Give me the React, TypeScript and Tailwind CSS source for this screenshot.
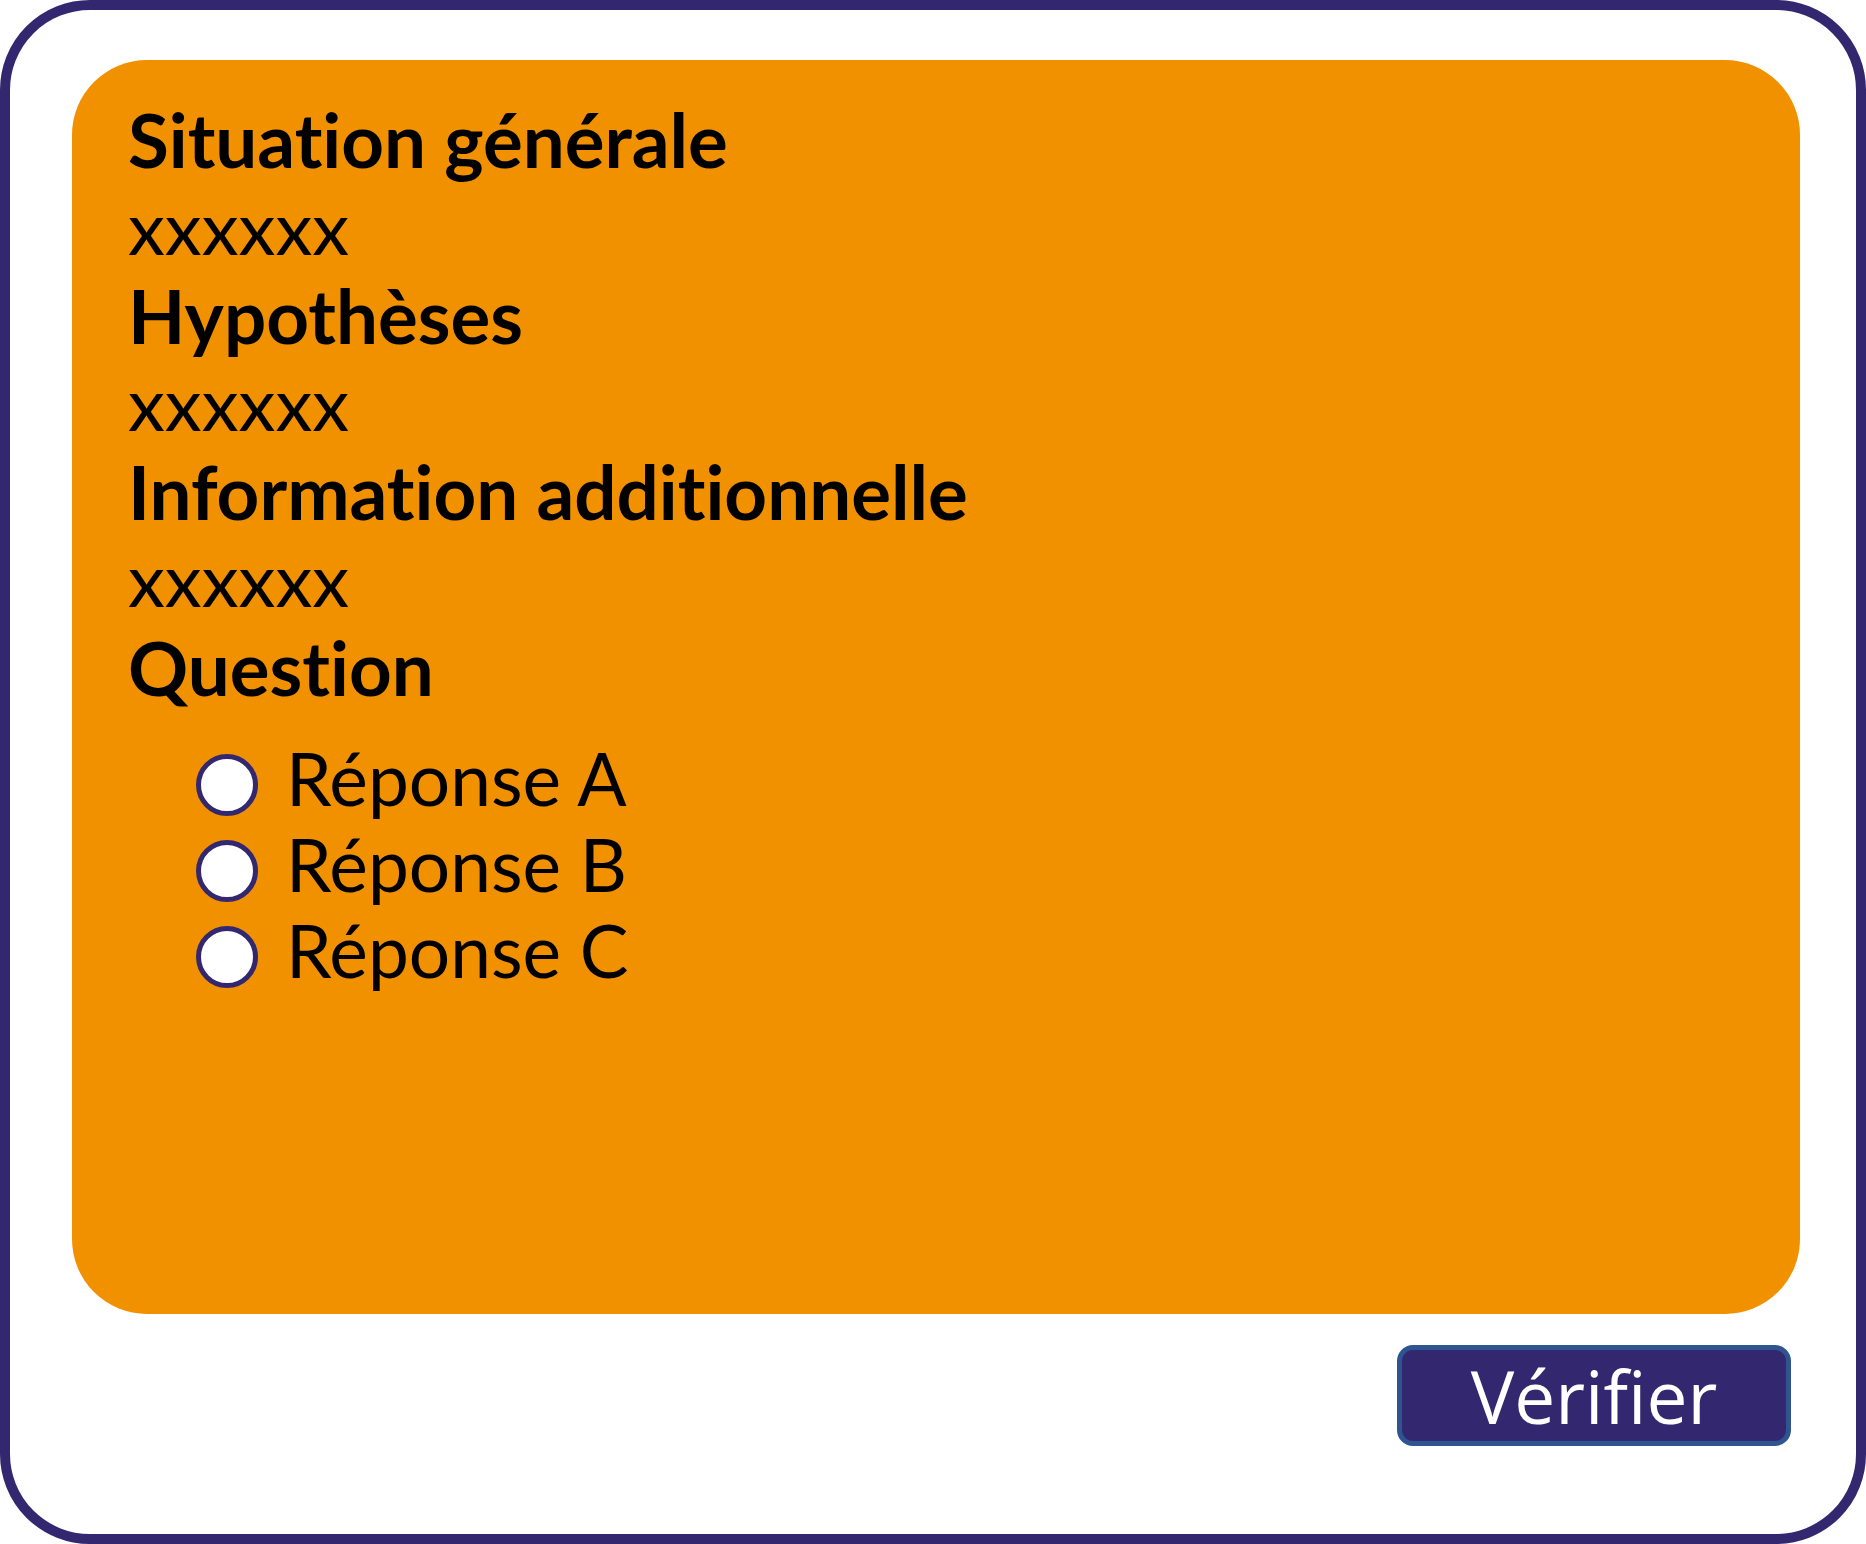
const sections = [
  { title: 'Situation générale', body: 'xxxxxx' },
  { title: 'Hypothèses', body: 'xxxxxx' },
  { title: 'Information additionnelle', body: 'xxxxxx' },
]

const answers = ['Réponse A', 'Réponse B', 'Réponse C']

function Radio() {
  return (
    <span className="mt-[20px] h-[62px] w-[62px] shrink-0 rounded-full border-[5px] border-[#33286f] bg-white" />
  )
}

export default function App() {
  return (
    <div className="flex h-[1544px] w-[1866px] flex-col rounded-[90px] border-[10px] border-[#33286f] bg-white pt-[50px]">
      <div
        className="ml-[62px] mr-[56px] h-[1254px] rounded-[75px] bg-[#f29100] px-[56px] pt-[35px] text-black [font-variant-ligatures:none]"
        style={{ fontFamily: 'Lato, "Noto Sans", sans-serif' }}
      >
        {sections.map((s) => (
          <div key={s.title}>
            <h2 className="text-[74.5px] font-bold leading-[88px]">{s.title}</h2>
            <p className="text-[74px] leading-[88px]">{s.body}</p>
          </div>
        ))}
        <h2 className="text-[74.5px] font-bold leading-[88px]">Question</h2>
        <ul className="mt-[23px] pl-[68px]">
          {answers.map((a) => (
            <li key={a} className="flex h-[86px] items-start gap-[28px]">
              <Radio />
              <span className="text-[73px] leading-[88px]">{a}</span>
            </li>
          ))}
        </ul>
      </div>
      <div className="mt-[31px] flex justify-end pr-[65px]">
        <button
          className="flex h-[101px] w-[394px] items-center justify-center rounded-[16px] border-[5px] border-[#2f5591] bg-[#33286f] text-[73px] leading-none text-white [font-variant-ligatures:none]"
          style={{ fontFamily: '"Open Sans", "Noto Sans", sans-serif' }}
        >
          Vérifier
        </button>
      </div>
    </div>
  )
}
